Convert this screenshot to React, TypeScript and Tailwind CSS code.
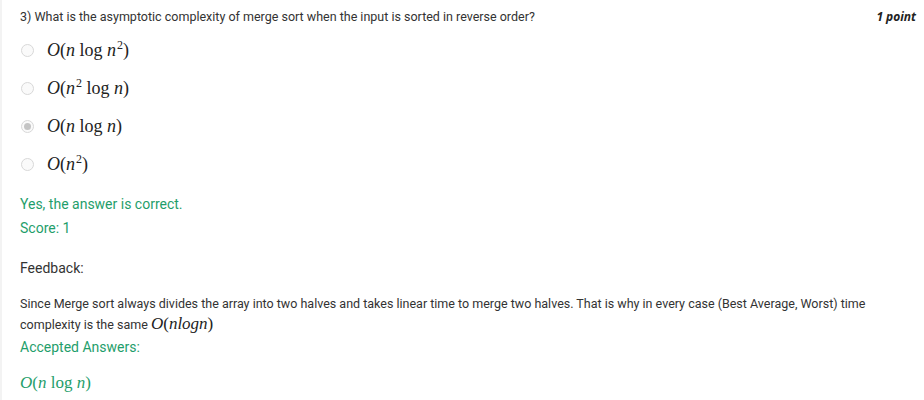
import { ReactNode } from "react";

const mathFont = { fontFamily: '"Liberation Serif", "DejaVu Serif", serif' };

const M = ({ children }: { children: ReactNode }) => <i>{children}</i>;

const Sup = ({ children }: { children: ReactNode }) => (
  <span className="inline-block text-[12px] not-italic relative -top-[7px] ml-[1px] leading-none">{children}</span>
);

const Radio = ({ checked }: { checked?: boolean }) => (
  <span className="w-[13px] h-[13px] rounded-full border border-[#d8d8d8] bg-[#fafafa] flex items-center justify-center shrink-0">
    {checked && <span className="w-[7px] h-[7px] rounded-full bg-[#c4c4c4]" />}
  </span>
);

const options: { node: ReactNode; checked?: boolean }[] = [
  {
    node: (
      <>
        <M>O</M>(<M>n</M> log <M>n</M>
        <Sup>2</Sup>)
      </>
    ),
  },
  {
    node: (
      <>
        <M>O</M>(<M>n</M>
        <Sup>2</Sup> log <M>n</M>)
      </>
    ),
  },
  {
    node: (
      <>
        <M>O</M>(<M>n</M> log <M>n</M>)
      </>
    ),
    checked: true,
  },
  {
    node: (
      <>
        <M>O</M>(<M>n</M>
        <Sup>2</Sup>)
      </>
    ),
  },
];

export default function App() {
  return (
    <div
      className="w-[924px] h-[400px] bg-white flex overflow-hidden text-[#333]"
      style={{ fontFamily: 'Roboto, "Liberation Sans", sans-serif' }}
    >
      <div className="w-[2px] bg-[#f3f3f3] shrink-0" />
      <div className="flex-1 pl-[18px] pr-[8px]">
        <div className="flex justify-between items-start pt-[8px] text-[12.5px] leading-[18px]">
          <span>
            3) What is the asymptotic complexity of merge sort when the input is sorted in reverse order?
          </span>
          <span className="font-bold italic text-[12px] text-[#222]" style={{ fontFamily: '"Open Sans", sans-serif' }}>
            1 point
          </span>
        </div>
        <div className="flex flex-col mt-[5px]">
          {options.map((o, i) => (
            <div key={i} className="flex items-center h-[38px] pl-[1px] gap-[13px]">
              <Radio checked={o.checked} />
              <span className="text-[18px] leading-none text-[#222]" style={mathFont}>
                {o.node}
              </span>
            </div>
          ))}
        </div>
        <div className="mt-[9px] text-[14px] leading-[24px] text-[#1f9e6b]">
          <div>Yes, the answer is correct.</div>
          <div>Score: 1</div>
        </div>
        <div className="mt-[16px] text-[14px] leading-[24px]">Feedback:</div>
        <div className="mt-[13px] text-[12.5px] leading-[21px] text-[#333]">
          Since Merge sort always divides the array into two halves and takes linear time to merge two halves. That is why in every case (Best Average, Worst) time
          <br />
          complexity is the same{" "}
          <span className="text-[17px] leading-none text-[#222]" style={mathFont}>
            <M>O</M>(<M>nlogn</M>)
          </span>
        </div>
        <div className="mt-[1px] text-[14px] leading-[22px] text-[#1f9e6b]">Accepted Answers:</div>
        <div className="mt-[14px] text-[17px] leading-[22px] text-[#1f9e6b]" style={mathFont}>
          <M>O</M>(<M>n</M> log <M>n</M>)
        </div>
      </div>
    </div>
  );
}
